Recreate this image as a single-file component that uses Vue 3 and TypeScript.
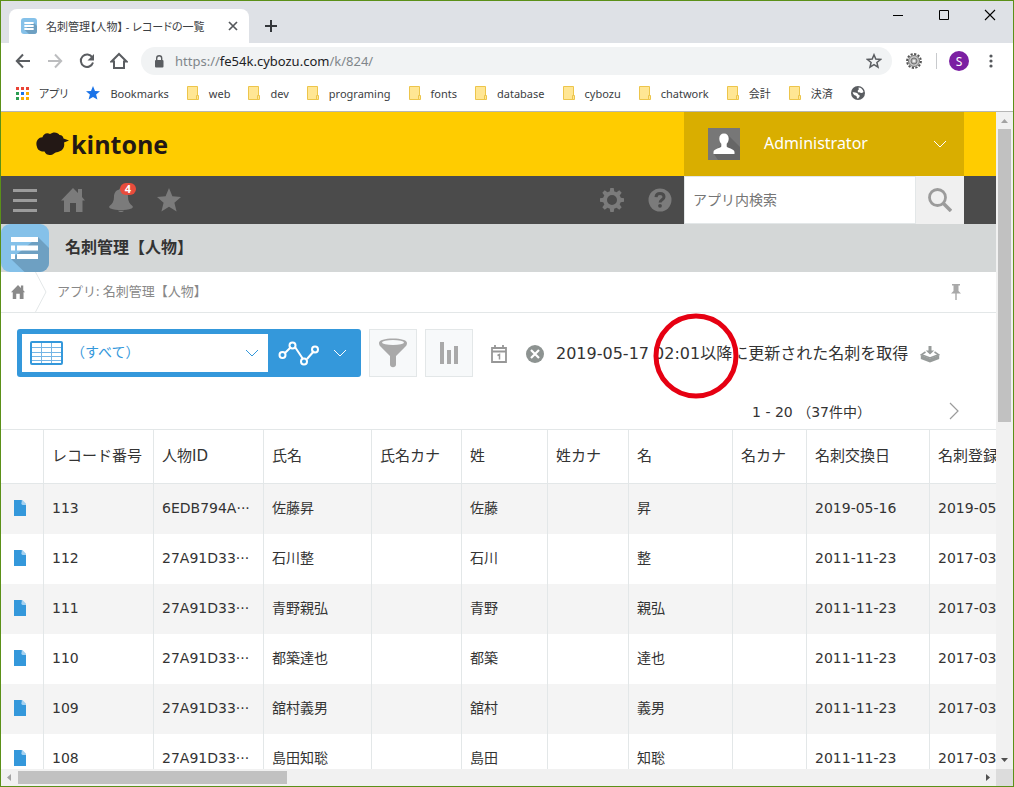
<script setup lang="ts">
import { ref } from 'vue'

interface CardRecord {
  no: number
  personId: string
  name: string
  family: string
  given: string
  exchanged: string
  registered: string
}

const folders: string[] = ['web', 'dev', 'programing', 'fonts', 'database', 'cybozu', 'chatwork', '会計', '決済']

const headings: string[] = ['レコード番号', '人物ID', '氏名', '氏名カナ', '姓', '姓カナ', '名', '名カナ', '名刺交換日', '名刺登録日']

const records: CardRecord[] = [
  { no: 113, personId: '6EDB794A', name: '佐藤昇', family: '佐藤', given: '昇', exchanged: '2019-05-16', registered: '2019-05-16' },
  { no: 112, personId: '27A91D33', name: '石川整', family: '石川', given: '整', exchanged: '2011-11-23', registered: '2017-03-14' },
  { no: 111, personId: '27A91D33', name: '青野親弘', family: '青野', given: '親弘', exchanged: '2011-11-23', registered: '2017-03-14' },
  { no: 110, personId: '27A91D33', name: '都築達也', family: '都築', given: '達也', exchanged: '2011-11-23', registered: '2017-03-14' },
  { no: 109, personId: '27A91D33', name: '舘村義男', family: '舘村', given: '義男', exchanged: '2011-11-23', registered: '2017-03-14' },
  { no: 108, personId: '27A91D33', name: '島田知聡', family: '島田', given: '知聡', exchanged: '2011-11-23', registered: '2017-03-14' },
]

const address = ref('https://fe54k.cybozu.com/k/824/')
const editing = ref(false)
const keyword = ref('')
const view = ref('all')
</script>

<template>
  <div class="window">
    <div class="tabstrip">
      <div class="tab">
        <svg class="favicon" viewBox="0 0 48 48" aria-hidden="true">
          <rect width="48" height="48" rx="9" fill="#85c1e9" />
          <path d="M37 13L48 24V39a9 9 0 0 1-9 9H24L10 35z" fill="#6ea0c2" />
          <path d="M10 12h28v6H10zM10 21h28v6H10zM10 30h28v6H10z" fill="#fff" />
        </svg>
        <span class="tab-title">名刺管理【人物】 - レコードの一覧</span>
        <button class="plain" type="button" aria-label="タブを閉じる">
          <svg width="10" height="10" viewBox="0 0 10 10"><path d="M1 1l8 8M9 1L1 9" stroke="#55585c" stroke-width="1.7" /></svg>
        </button>
      </div>
      <button class="plain new-tab" type="button" aria-label="新しいタブ">
        <svg width="12" height="12" viewBox="0 0 12 12"><path d="M6 0v12M0 6h12" stroke="#33363a" stroke-width="2" /></svg>
      </button>
      <div class="window-controls">
        <button class="plain" type="button" aria-label="最小化">
          <svg width="12" height="12" viewBox="0 0 12 12"><path d="M1 6.500h10" stroke="#000" /></svg>
        </button>
        <button class="plain" type="button" aria-label="最大化">
          <svg width="12" height="12" viewBox="0 0 12 12"><path d="M1.500 1.500h9v9h-9z" fill="none" stroke="#000" /></svg>
        </button>
        <button class="plain" type="button" aria-label="閉じる">
          <svg width="12" height="12" viewBox="0 0 12 12"><path d="M1 1l10 10M11 1L1 11" stroke="#000" stroke-width="1.1" /></svg>
        </button>
      </div>
    </div>

    <div class="address-row">
      <button class="plain nav" type="button" aria-label="戻る">
        <svg width="16" height="16" viewBox="0 0 16 16"><path d="M15 8H2M8 1.500L1.800 8 8 14.500" fill="none" stroke="#5a5d61" stroke-width="2" /></svg>
      </button>
      <button class="plain nav" type="button" aria-label="進む">
        <svg width="16" height="16" viewBox="0 0 16 16"><path d="M1 8h13M8 1.500L14.200 8 8 14.500" fill="none" stroke="#bcbdbf" stroke-width="2" /></svg>
      </button>
      <button class="plain nav" type="button" aria-label="再読み込み">
        <svg width="16" height="16" viewBox="0 0 16 16"><path d="M13.300 4.400A6.200 6.200 0 1 0 14 9.500" fill="none" stroke="#5a5d61" stroke-width="2" /><path d="M15 1v6.500H8.500z" fill="#5a5d61" /></svg>
      </button>
      <button class="plain nav" type="button" aria-label="ホーム">
        <svg width="18" height="18" viewBox="0 0 18 18"><path d="M1.500 9.500L9 2l7.500 7.500H14V16H4V9.500z" fill="none" stroke="#5a5d61" stroke-width="2" /></svg>
      </button>
      <div class="omnibox">
        <svg width="10" height="13" viewBox="0 0 10 13" aria-hidden="true"><rect x="1" y="5" width="8.500" height="7.500" rx="1" fill="#5a5d61" /><path d="M2.700 5V3.300a2.500 2.500 0 0 1 5 0V5" fill="none" stroke="#5a5d61" stroke-width="1.400" /></svg>
        <input v-if="editing" v-model="address" class="address-input" aria-label="アドレス" @blur="editing = false" />
        <a v-else class="url" href="#" @click.prevent="editing = true">https://<span class="host">fe54k.cybozu.com</span>/k/824/</a>
        <button class="plain" type="button" aria-label="ブックマークに追加">
          <svg width="16" height="16" viewBox="0 0 16 16"><path d="M8 1.800l1.800 4.300 4.700.4-3.600 3 1.100 4.600L8 11.700l-4 2.400 1.100-4.600-3.600-3 4.700-.4z" fill="none" stroke="#5a5d61" stroke-width="1.500" /></svg>
        </button>
      </div>
      <button class="plain extension" type="button" aria-label="拡張機能">
        <svg width="16" height="16" viewBox="0 0 16 16"><circle cx="8" cy="8" r="6.900" fill="none" stroke="#555" stroke-width="2" stroke-dasharray="2.200 1.400" /><circle cx="8" cy="8" r="5.500" fill="#c4c4c4" stroke="#777" /><circle cx="8" cy="8" r="3" fill="#a5a5a5" stroke="#777" /><circle cx="8" cy="8" r="1.600" fill="#eee" /></svg>
      </button>
      <span class="divider"></span>
      <button class="plain profile" type="button" aria-label="プロフィール">S</button>
      <button class="plain menu" type="button" aria-label="メニュー">
        <svg width="4" height="14" viewBox="0 0 4 14"><circle cx="2" cy="2" r="1.600" fill="#55585c" /><circle cx="2" cy="7" r="1.600" fill="#55585c" /><circle cx="2" cy="12" r="1.600" fill="#55585c" /></svg>
      </button>
    </div>

    <nav class="bookmarks" aria-label="ブックマーク">
      <a class="bookmark" href="#">
        <svg width="13" height="14" viewBox="0 0 13 14">
          <path d="M0 1h3v3H0zM5 1h3v3H5zM10 1h3v3h-3z" fill="#ea4335" />
          <path d="M0 6h3v3H0zM0 11h3v3H0z" fill="#2a9d52" /><path d="M5 6h3v3H5z" fill="#1a73e8" />
          <path d="M10 6h3v3h-3zM5 11h3v3H5zM10 11h3v3h-3z" fill="#f9ab00" />
        </svg>
        <span>アプリ</span>
      </a>
      <a class="bookmark" href="#">
        <svg width="14" height="14" viewBox="0 0 14 14"><path d="M7 0l2 4.900 5 .4-3.900 3.300 1.300 5L7 10.900l-4.400 2.700 1.300-5L0 5.300l5-.4z" fill="#1a73e8" /></svg>
        <span>Bookmarks</span>
      </a>
      <a v-for="folder in folders" :key="folder" class="bookmark" href="#">
        <svg width="12" height="14" viewBox="0 0 12 14"><path d="M.500.500h10v13H.500z" fill="#ffe694" stroke="#edc54b" /><path d="M9.500 9.500h2v4h-2z" fill="#ffe694" stroke="#edc54b" /></svg>
        <span>{{ folder }}</span>
      </a>
      <a class="bookmark" href="#" aria-label="サイト">
        <svg width="14" height="14" viewBox="0 0 14 14"><circle cx="7" cy="7" r="7" fill="#5a5d61" /><path d="M7.500 1.500c2.500 0 4.500 2 5 4.500-1 .8-2 1.500-3 .8-.8-.6-2-.2-2.600-1C6.300 5 7 4 7.800 3.600zM1.600 6.300c1.700 0 3.500.1 4.700.9.900.7.700 1.600 1.800 1.900 1 .3.700 1.800-.1 2.300-.6.400-.5 1-1.300 1.100-1 0-.7-1.500-1.200-2.300-.6-.7-1.700-.8-2.600-1.500-.6-.6-1.200-1.400-1.300-2.400z" fill="#fff" /></svg>
      </a>
    </nav>

    <div class="viewport">
      <main class="page">
        <header class="brand-bar">
          <a class="logo" href="#">
            <svg width="34" height="24" viewBox="0 0 34 24" aria-hidden="true"><path d="M1 15C-1 10 2 5 6.500 5.200 7 2 11 0 14 2c3-2.500 8-2 9.500 1 2.500.2 3.800 1.500 4 3.500L33 8.500l-5 2c1.200 5-2 9-6 9.500-2 .3-3 .5-4 1.500-3 2.500-8 2-9.500-2C5 20 1.500 18 1 15z" fill="#231815" /></svg>
            <span>kintone</span>
          </a>
          <button class="user" type="button">
            <svg class="avatar" viewBox="0 0 32 32" aria-hidden="true"><path d="M0 0h32v32H0z" fill="#777" /><path d="M20 7l12 12v13H10L6 26z" fill="#666" /><path d="M16 5.500c-3 0-4.700 2-4.700 5 0 2 .7 4 2 5.300v2.700c0 1.400-7.800 2.200-7.800 5.500v2h21v-2c0-3.300-7.800-4.100-7.800-5.500v-2.700c1.300-1.300 2-3.300 2-5.300 0-3-1.700-5-4.700-5z" fill="#fff" /></svg>
            <span class="user-name">Administrator</span>
            <svg width="14" height="8" viewBox="0 0 14 8" aria-hidden="true"><path d="M1 1l6 6 6-6" fill="none" stroke="#fff" /></svg>
          </button>
        </header>

        <div class="tool-bar">
          <button class="plain tool" type="button" aria-label="メニュー">
            <svg width="24" height="24" viewBox="0 0 24 24"><path d="M0 2.500h24M0 12.500h24M0 22.500h24" stroke="#9b9b9b" stroke-width="3" /></svg>
          </button>
          <button class="plain tool" type="button" aria-label="ポータル">
            <svg width="24" height="24" viewBox="0 0 24 24"><path d="M12 0l5 5V1h4v8l3 3.500h-2.500V24H15v-9H9v9H3V12.500H0z" fill="#7b7b7b" /></svg>
          </button>
          <button class="plain tool bell" type="button" aria-label="通知 4件">
            <svg width="24" height="24" viewBox="0 0 24 24"><path d="M12 0c-1 0-1.600.6-1.800 1.600C6.500 2.500 5 5.500 5 9c0 4-1.500 7-4.500 9-.8 1.400 0 2 1 2.500 6 2 15 2 21 0 1-.5 1.800-1.100 1-2.500-3-2-4.500-5-4.500-9 0-3.500-1.500-6.500-5.200-7.400C13.600.6 13 0 12 0zM9 22.700c1 1.700 5 1.700 6 0z" fill="#7b7b7b" /></svg>
            <span class="count">4</span>
          </button>
          <button class="plain tool" type="button" aria-label="お気に入り">
            <svg width="24" height="24" viewBox="0 0 24 24"><path d="M12 0l3.400 8.300L24 9l-6.600 5.800 2.200 8.700L12 18.800l-7.600 4.700 2.200-8.700L0 9l8.600-.7z" fill="#7b7b7b" /></svg>
          </button>
          <div class="tool-spacer"></div>
          <button class="plain tool" type="button" aria-label="設定">
            <svg width="24" height="24" viewBox="0 0 24 24"><g fill="#7b7b7b"><path d="M9.500 5L10.300 0h3.400l.8 5zM9.500 19l.8 5h3.400l.8-5z" /><path d="M9.500 5L10.300 0h3.400l.8 5zM9.500 19l.8 5h3.400l.8-5z" transform="rotate(45 12 12)" /><path d="M9.500 5L10.300 0h3.400l.8 5zM9.500 19l.8 5h3.400l.8-5z" transform="rotate(90 12 12)" /><path d="M9.500 5L10.300 0h3.400l.8 5zM9.500 19l.8 5h3.400l.8-5z" transform="rotate(135 12 12)" /></g><circle cx="12" cy="12" r="7" fill="none" stroke="#7b7b7b" stroke-width="4" /></svg>
          </button>
          <button class="plain tool" type="button" aria-label="ヘルプ">
            <svg width="24" height="24" viewBox="0 0 24 24"><circle cx="12" cy="12" r="11.500" fill="#7b7b7b" /><path d="M8 9.200C8.200 6.700 9.800 5.600 12 5.600c2.400 0 4 1.200 4 3.300 0 2.900-3.900 2.700-3.900 5.600" fill="none" stroke="#4b4b4b" stroke-width="3" /><circle cx="12" cy="17.800" r="1.900" fill="#4b4b4b" /></svg>
          </button>
          <form class="search" @submit.prevent>
            <input v-model="keyword" class="search-input" type="text" placeholder="アプリ内検索" aria-label="アプリ内検索" />
            <button class="plain search-button" type="submit" aria-label="検索">
              <svg width="24" height="24" viewBox="0 0 24 24"><circle cx="9.500" cy="9.500" r="8" fill="none" stroke="#9b9b9b" stroke-width="2.800" /><path d="M15 15l8 8" stroke="#9b9b9b" stroke-width="3.500" /></svg>
            </button>
          </form>
        </div>

        <div class="app-title">
          <svg width="48" height="48" viewBox="0 0 48 48" aria-hidden="true">
            <rect width="48" height="48" rx="9" fill="#85c1e9" />
            <path d="M37 13l11 11V39a9 9 0 0 1-9 9H23.500L10 35z" fill="#6ea0c2" />
            <path d="M10 13h27v5H10zM10 21.500h4v5h-4zM16 21.500h21v5H16zM10 30h4v5h-4zM16 30h21v5H16z" fill="#fff" />
          </svg>
          <h1>名刺管理【人物】</h1>
        </div>

        <nav class="breadcrumb" aria-label="パンくずリスト">
          <a class="crumb-home" href="#" aria-label="ホーム">
            <svg width="14" height="14" viewBox="0 0 24 24"><path d="M12 0l5 5V1h4v8l3 3.500h-2.500V24H15v-9H9v9H3V12.500H0z" fill="#8a8a8a" /></svg>
          </a>
          <svg width="12" height="40" viewBox="0 0 12 40" aria-hidden="true"><path d="M.500 0l10.500 20L.500 40" fill="none" stroke="#e3e7e8" /></svg>
          <a class="crumb" href="#">アプリ: 名刺管理【人物】</a>
          <button class="plain pin" type="button" aria-label="固定">
            <svg width="10" height="16" viewBox="0 0 10 16"><path d="M1 0h8v1.500H7.500V7L10 9.500H5.700V16H4.300V9.500H0L2.500 7V1.500H1z" fill="#a9a9a9" /></svg>
          </button>
        </nav>

        <section class="view-bar">
          <div class="view-box">
            <label class="view-select">
              <svg width="33" height="24" viewBox="0 0 33 24" aria-hidden="true"><path d="M1 6.500h31M1 11.500h31M1 15.500h31M1 19.500h31M11.500 1v22M21.500 1v22" stroke="#74b5e5" /><rect x="1" y="1" width="31" height="22" rx="1" fill="none" stroke="#3498db" stroke-width="2" /></svg>
              <select v-model="view" aria-label="一覧">
                <option value="all">（すべて）</option>
              </select>
              <svg width="14" height="8" viewBox="0 0 14 8" aria-hidden="true"><path d="M1 1l6 6 6-6" fill="none" stroke="#3498db" /></svg>
            </label>
            <button class="plain graph" type="button" aria-label="グラフ">
              <svg width="42" height="26" viewBox="0 0 42 26"><g fill="none" stroke="#fff" stroke-width="2"><path d="M7 13l6-6M17 7l8 12M29 19l7-8" /><circle cx="4.500" cy="15" r="3" /><circle cx="14.500" cy="5.500" r="3" /><circle cx="26" cy="21.500" r="3" /><circle cx="37" cy="9.500" r="3" /></g></svg>
              <svg width="14" height="8" viewBox="0 0 14 8"><path d="M1 1l6 6 6-6" fill="none" stroke="#fff" /></svg>
            </button>
          </div>
          <button class="plain square" type="button" aria-label="絞り込み">
            <svg width="28" height="30" viewBox="0 0 28 30"><path d="M0 5C0 2 6 .5 14 .5S28 2 28 5c0 2-1 3-2 4l-9 9v8.500c0 3.500-6 3.500-6 0V18L2 9C1 8 0 7 0 5z" fill="#a9a9a9" /><ellipse cx="14" cy="4.500" rx="11" ry="2.500" fill="#f7f9fa" /></svg>
          </button>
          <button class="plain square" type="button" aria-label="集計">
            <svg width="19" height="22" viewBox="0 0 19 22"><path d="M0 0h4v22H0zM7 8h4v14H7zM14 4h4v18h-4z" fill="#a9a9a9" /></svg>
          </button>
          <div class="update">
            <button class="plain" type="button" aria-label="日付を選択">
              <svg width="16" height="18" viewBox="0 0 16 18"><path d="M1 3h14v14H1zM1 6.500h14M4 0v4M12 0v4" fill="none" stroke="#979797" stroke-width="1.800" /><path d="M6.500 10.500L8.500 9.500v5" fill="none" stroke="#979797" stroke-width="1.500" /></svg>
            </button>
            <button class="plain clear" type="button" aria-label="日付をクリア">
              <svg width="18" height="18" viewBox="0 0 18 18"><circle cx="9" cy="9" r="9" fill="#8d9391" /><path d="M5 5l8 8M13 5l-8 8" stroke="#fff" stroke-width="2.200" /></svg>
            </button>
            <p class="message">
              2019-05-17 02:01以降に更新された名刺を取得
              <svg class="ring" width="86" height="86" viewBox="0 0 86 86" aria-hidden="true"><circle cx="43" cy="43" r="40" fill="none" stroke="#e60012" stroke-width="5" /></svg>
            </p>
            <button class="plain" type="button" aria-label="取得">
              <svg width="20" height="18" viewBox="0 0 20 18"><path d="M8.500 1h3v4.500h2.700L10 9.500l-4.200-4H8.500z" fill="#979b9a" /><path d="M5.500 7L1.500 9.700 10 13l8.500-3.300L14.500 7" fill="none" stroke="#979b9a" stroke-width="1.600" /><path d="M.800 10l9.200 3.500 9.200-3.500v4L10 17.500.800 14z" fill="#979b9a" /></svg>
            </button>
          </div>
        </section>

        <div class="pager">
          <span>1 - 20 （37件中）</span>
          <button class="plain" type="button" aria-label="次へ">
            <svg width="10" height="18" viewBox="0 0 10 18"><path d="M1 1l8 8-8 8" fill="none" stroke="#9b9b9b" stroke-width="1.200" /></svg>
          </button>
        </div>

        <table class="records">
          <colgroup>
            <col class="c-icon" /><col class="c-wide" /><col class="c-wide" /><col class="c-name" /><col class="c-kana" />
            <col class="c-family" /><col class="c-fkana" /><col class="c-given" /><col class="c-gkana" /><col class="c-date" /><col class="c-date" />
          </colgroup>
          <thead>
            <tr>
              <th aria-label="詳細"></th>
              <th v-for="heading in headings" :key="heading">{{ heading }}</th>
            </tr>
          </thead>
          <tbody>
            <tr v-for="record in records" :key="record.no">
              <td class="detail">
                <a href="#" :aria-label="`レコード${record.no}の詳細`">
                  <svg width="12" height="16" viewBox="0 0 12 16"><path d="M0 0h7.500L12 4.500V16H0z" fill="#3498db" /><path d="M8 0h.500L12 3.800V5H8.500L7.300 4z" fill="#a6d2f0" /></svg>
                </a>
              </td>
              <td>{{ record.no }}</td>
              <td>{{ record.personId }}···</td>
              <td>{{ record.name }}</td>
              <td></td>
              <td>{{ record.family }}</td>
              <td></td>
              <td>{{ record.given }}</td>
              <td></td>
              <td>{{ record.exchanged }}</td>
              <td>{{ record.registered }}</td>
            </tr>
          </tbody>
        </table>
      </main>

      <div class="scroll-y" aria-hidden="true">
        <svg class="arrow-y" viewBox="0 0 17 17"><path d="M5 11h7L8.500 7z" fill="#a3a3a3" /></svg>
        <div class="track-y"><div class="thumb-y"></div></div>
        <svg class="arrow-y" viewBox="0 0 17 17"><path d="M5 6h7l-3.500 4z" fill="#505050" /></svg>
      </div>
      <div class="scroll-x" aria-hidden="true">
        <svg class="arrow-x" viewBox="0 0 17 17"><path d="M10 5v7L6 8.500z" fill="#a3a3a3" /></svg>
        <div class="track-x"><div class="thumb-x"></div></div>
        <svg class="arrow-x" viewBox="0 0 17 17"><path d="M7 5v7l4-3.500z" fill="#505050" /></svg>
      </div>
      <div class="corner"></div>
    </div>
  </div>
</template>

<style>
body {
  margin: 0;
}
</style>

<style scoped>
* {
  box-sizing: border-box;
}

svg {
  display: block;
  flex: none;
}

a {
  color: inherit;
  text-decoration: none;
}

.plain {
  display: flex;
  flex: none;
  align-items: center;
  justify-content: center;
  padding: 0;
  border: 0;
  background: none;
  font: inherit;
  color: inherit;
}

.window {
  display: flex;
  flex-direction: column;
  height: 100vh;
  overflow: hidden;
  border: 1px solid #5b9018;
  background: #fff;
  color: #333;
  font-family: "DejaVu Sans", "Noto Sans CJK JP", sans-serif;
  font-size: 14px;
}

/* Browser chrome */
.tabstrip,
.address-row,
.bookmarks {
  flex: none;
  display: flex;
  font-family: "Noto Sans", "Noto Sans CJK JP", sans-serif;
}

.tabstrip {
  height: 42px;
  padding-left: 8px;
  background: #dee1e6;
}

.tab {
  display: flex;
  align-items: center;
  width: 240px;
  height: 34px;
  margin-top: 8px;
  padding: 0 11px 0 12px;
  border-radius: 8px 8px 0 0;
  background: #fff;
}

.favicon {
  width: 16px;
  height: 16px;
}

.tab-title {
  flex: 1;
  margin-left: 9px;
  overflow: hidden;
  white-space: nowrap;
  font-size: 11px;
  font-feature-settings: "palt";
  color: #3c4043;
}

.new-tab {
  width: 28px;
  height: 34px;
  margin: 8px 0 0 8px;
}

.window-controls {
  display: flex;
  height: 28px;
  margin-left: auto;
}

.window-controls .plain {
  width: 46px;
}

.address-row {
  align-items: center;
  height: 36px;
  padding: 0 12px 0 6px;
}

.nav {
  width: 32px;
  height: 28px;
}

.omnibox {
  flex: 1;
  display: flex;
  align-items: center;
  height: 28px;
  margin-left: 6px;
  padding: 0 10px 0 13px;
  border-radius: 14px;
  background: #f1f3f4;
}

.url,
.address-input {
  flex: 1;
  min-width: 0;
  margin-left: 11px;
  border: 0;
  background: none;
  font: inherit;
  font-size: 13px;
  color: #80868b;
}

.host {
  color: #202124;
}

.extension {
  margin-left: 14px;
}

.divider {
  width: 1px;
  height: 16px;
  margin: 0 12px 0 14px;
  background: #c8cacd;
}

.profile {
  width: 20px;
  height: 20px;
  border-radius: 50%;
  background: #7b1fa2;
  color: #fff;
  font-size: 12px;
}

.menu {
  width: 20px;
  margin-left: 12px;
}

.bookmarks {
  align-items: center;
  gap: 18px;
  height: 33px;
  padding: 0 15px 4px;
  border-bottom: 1px solid #b6b6b6;
  font-size: 11px;
  font-feature-settings: "palt";
  color: #3c4043;
}

.bookmark {
  display: flex;
  align-items: center;
  gap: 10px;
  white-space: nowrap;
}

/* Scrolling area */
.viewport {
  flex: 1;
  min-height: 0;
  display: grid;
  grid-template-columns: minmax(0, 1fr) 17px;
  grid-template-rows: minmax(0, 1fr) 17px;
}

.page {
  overflow: hidden;
}

.scroll-y,
.scroll-x {
  display: flex;
  background: #f1f1f1;
}

.scroll-y {
  flex-direction: column;
}

.arrow-y,
.arrow-x {
  width: 17px;
  height: 17px;
}

.track-y,
.track-x {
  flex: 1;
}

.track-y {
  padding: 0 2px;
}

.track-x {
  padding: 2px 0;
}

.thumb-y {
  height: 47%;
  background: #c1c1c1;
}

.thumb-x {
  width: 28%;
  height: 100%;
  background: #c1c1c1;
}

.corner {
  background: #dcdcdc;
}

/* Service header */
.brand-bar {
  display: flex;
  align-items: center;
  justify-content: space-between;
  height: 64px;
  padding: 0 32px 0 35px;
  background: #fc0;
}

.logo {
  display: flex;
  align-items: center;
  gap: 1px;
  color: #231815;
  font: bold 25px/32px "Open Sans", "Noto Sans", sans-serif;
}

.user {
  display: flex;
  align-items: center;
  width: 280px;
  height: 64px;
  padding: 0 17px 0 24px;
  border: 0;
  background: #d9ae00;
  color: #fff;
  font: 16px/24px "Noto Sans", sans-serif;
}

.avatar {
  width: 32px;
  height: 32px;
}

.user-name {
  flex: 1;
  margin-left: 24px;
  padding-bottom: 2px;
  text-align: left;
}

.tool-bar {
  display: flex;
  height: 48px;
  padding-right: 32px;
  background: #4b4b4b;
}

.tool {
  width: 48px;
  height: 48px;
}

.bell {
  position: relative;
}

.count {
  position: absolute;
  top: 7px;
  left: 23px;
  width: 16px;
  height: 12px;
  border-radius: 6px;
  background: #e74c3c;
  color: #fff;
  font: bold 11px/12px "Noto Sans", sans-serif;
  text-align: center;
}

.tool-spacer {
  flex: 1;
}

.search {
  display: flex;
  width: 280px;
}

.search-input {
  flex: 1;
  min-width: 0;
  padding: 0 8px 2px;
  border: 1px solid #e3e7e8;
  background: #fff;
  color: #333;
  font: 14px/20px "Noto Sans CJK JP", sans-serif;
}

.search-input::placeholder {
  color: #757575;
}

.search-button {
  width: 48px;
  background: #f0f0f0;
}

.app-title {
  display: flex;
  align-items: center;
  gap: 16px;
  height: 48px;
  background: #d4d7d7;
}

h1 {
  margin: 0;
  padding-bottom: 4px;
  color: #333;
  font: bold 16px/24px "Noto Sans CJK JP", sans-serif;
}

.breadcrumb {
  display: flex;
  align-items: center;
  height: 41px;
  padding-right: 35px;
  border-bottom: 1px solid #e3e7e8;
}

.crumb-home {
  width: 34px;
  padding-left: 10px;
}

.crumb {
  flex: 1;
  margin-left: 10px;
  padding-bottom: 2px;
  color: #888;
  font: 13px/20px "Noto Sans", "Noto Sans CJK JP", sans-serif;
}

.view-bar {
  display: flex;
  align-items: center;
  gap: 8px;
  padding: 16px 16px 0;
}

.view-box {
  display: flex;
  width: 344px;
  height: 48px;
  padding: 5px 0 5px 5px;
  border-radius: 3px;
  background: #3498db;
}

.view-select {
  display: flex;
  align-items: center;
  width: 246px;
  padding: 0 9px 0 8px;
  background: #fff;
}

.view-select select {
  flex: 1;
  min-width: 0;
  margin-left: 8px;
  padding: 0 0 4px;
  border: 0;
  appearance: none;
  background: none;
  color: #3498db;
  font: 14px/24px "Noto Sans CJK JP", sans-serif;
}

.graph {
  flex: 1;
  gap: 13px;
  padding-right: 4px;
}

.square {
  width: 48px;
  height: 48px;
  border: 1px solid #e3e7e8;
  background: #f7f9fa;
}

.update {
  display: flex;
  align-items: center;
  gap: 12px;
  margin-left: 10px;
  padding-top: 2px;
}

.clear {
  margin-left: 7px;
}

.message {
  position: relative;
  margin: 0;
  white-space: nowrap;
  font-size: 16px;
  line-height: 24px;
}

.ring {
  position: absolute;
  top: -29px;
  left: 97px;
}

.pager {
  display: flex;
  align-items: center;
  justify-content: flex-end;
  gap: 78px;
  height: 52px;
  padding: 15px 37px 0 0;
}

.records {
  width: 1051px;
  table-layout: fixed;
  border-collapse: separate;
  border-spacing: 0;
  border-top: 1px solid #e3e7e8;
  line-height: 20px;
}

.c-icon { width: 43px; }
.c-wide { width: 110px; }
.c-name { width: 108px; }
.c-kana { width: 90px; }
.c-family { width: 86px; }
.c-fkana { width: 81px; }
.c-given { width: 104px; }
.c-gkana { width: 74px; }
.c-date { width: 123px; }

th,
td {
  height: 50px;
  padding: 0 8px 2px;
  border-right: 1px solid #e3e7e8;
  text-align: left;
  white-space: nowrap;
}

th {
  height: 54px;
  border-bottom: 1px solid #e3e7e8;
  font-size: 15px;
  font-weight: normal;
}

tbody tr:nth-child(odd) {
  background: #f4f4f4;
}

.detail {
  padding-left: 13px;
}
</style>
